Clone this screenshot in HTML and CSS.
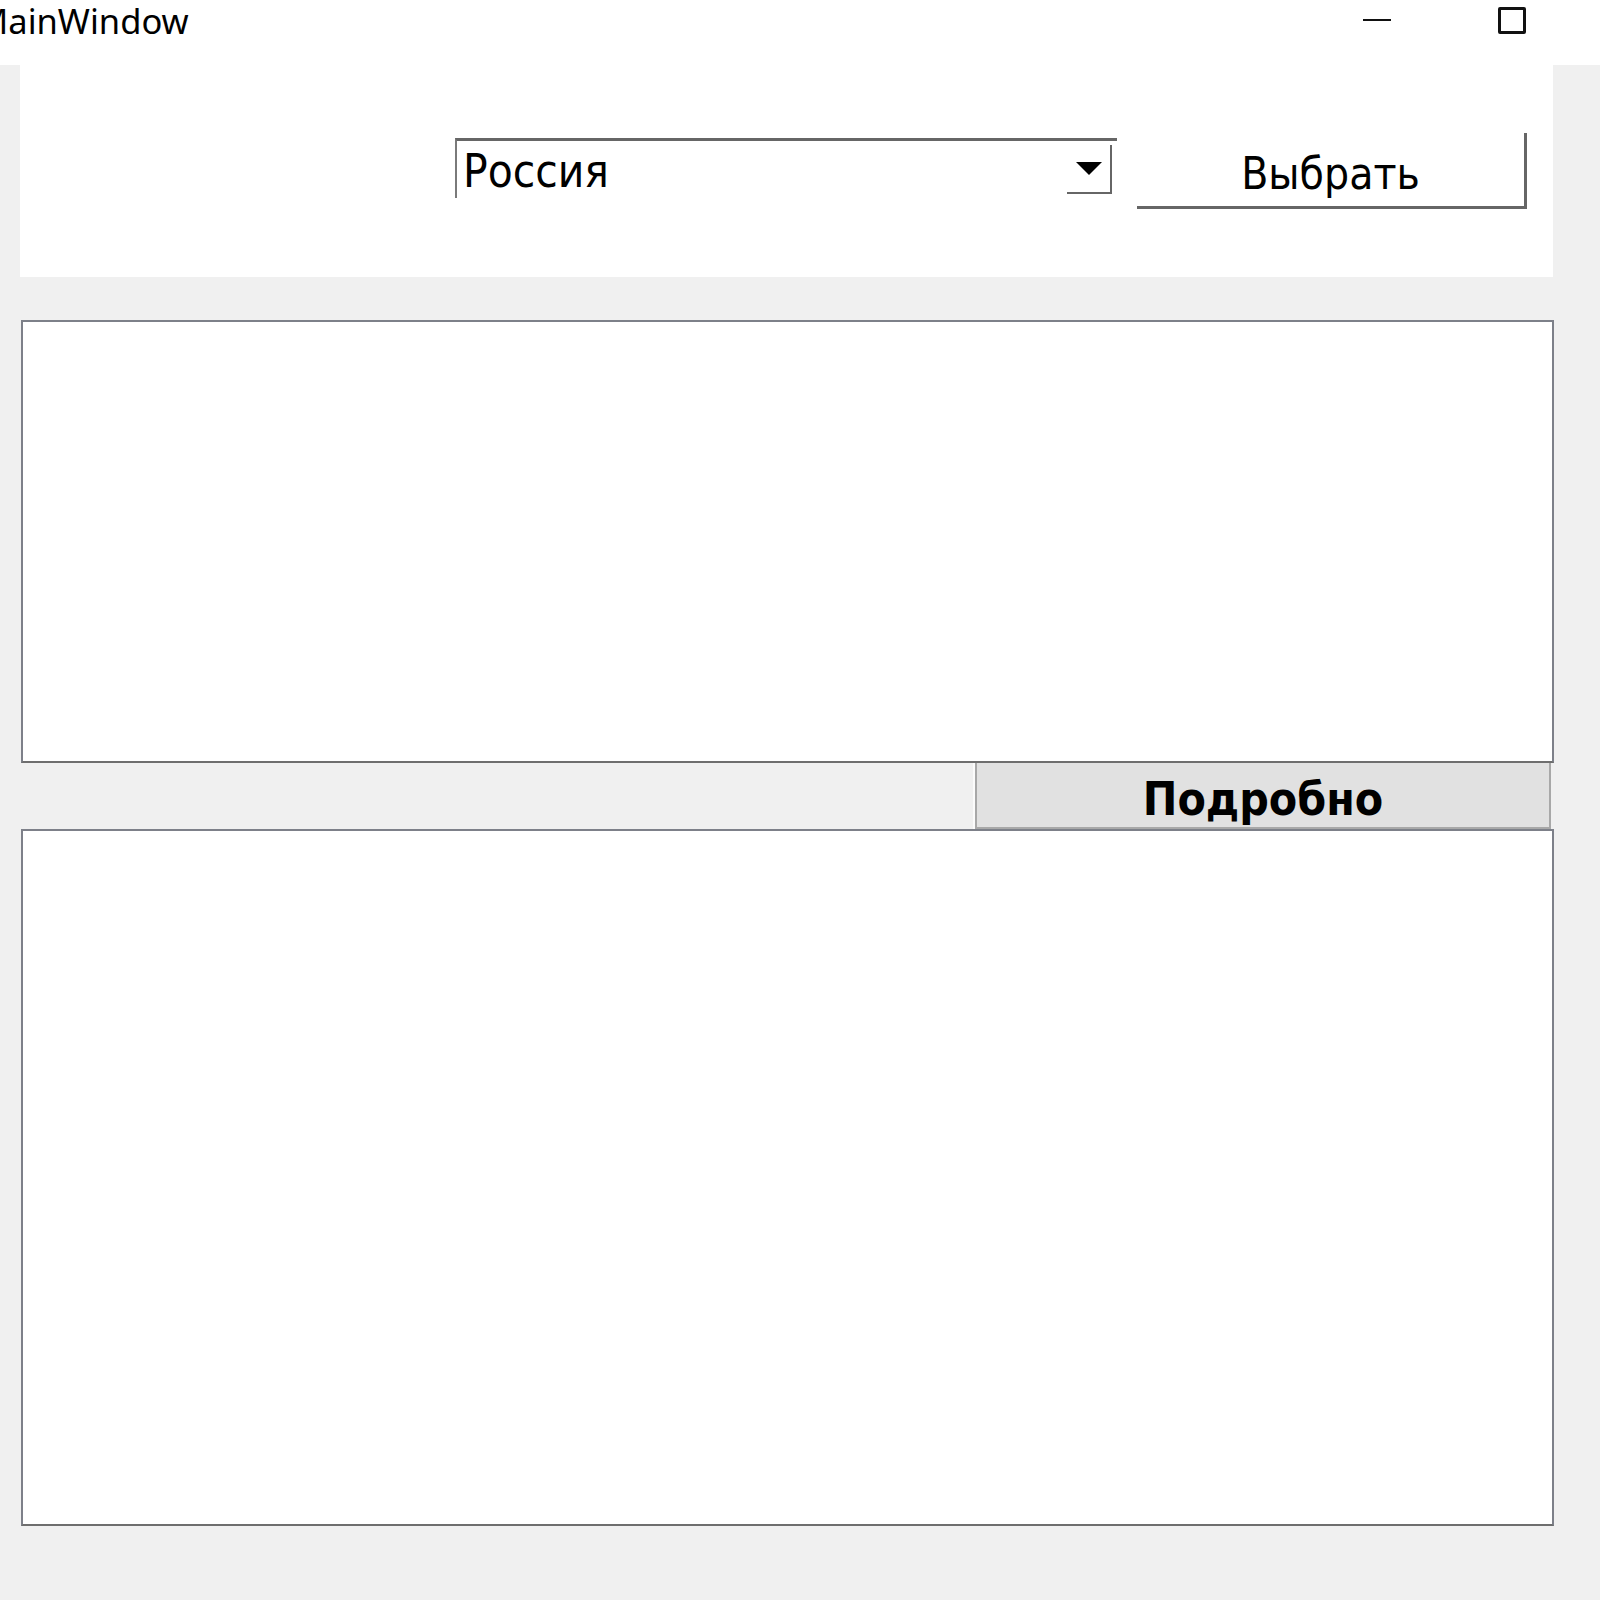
FILE: index.html
```html
<!DOCTYPE html>
<html lang="ru">
<head>
<meta charset="utf-8">
<title>MainWindow</title>
<link rel="stylesheet" href="styles.css">
</head>
<body>
<div class="window">
  <div class="titlebar">
    <span class="title">MainWindow</span>
    <div class="win-controls">
      <span class="win-min"></span>
      <span class="win-max"></span>
    </div>
  </div>
  <div class="top-panel">
    <div class="combo">
      <span class="combo-text">Россия</span>
      <span class="combo-btn">
        <svg width="26" height="13" viewBox="0 0 26 13"><polygon points="0,0 26,0 13,13" fill="#000"/></svg>
      </span>
    </div>
    <button class="choose-btn">Выбрать</button>
  </div>
  <div class="textbox textbox-top"></div>
  <div class="detail-row">
    <button class="detail-btn">Подробно</button>
  </div>
  <div class="textbox textbox-bottom"></div>
</div>
</body>
</html>
```

FILE: styles.css
```css
html, body {
  margin: 0;
  padding: 0;
}
body {
  background: #f0f0f0;
  width: 1600px;
  height: 1600px;
  overflow: hidden;
  font-family: "DejaVu Sans Condensed", "DejaVu Sans", sans-serif;
  font-stretch: condensed;
  color: #000;
}
.window {
  display: flex;
  flex-direction: column;
}
.titlebar {
  height: 65px;
  background: #fff;
  display: flex;
  align-items: flex-start;
}
.title {
  font-family: "Noto Sans", "Open Sans", sans-serif;
  font-stretch: normal;
  font-size: 34.5px;
  line-height: 45px;
  margin-left: -23px;
  margin-top: -2px;
  color: #000;
  white-space: nowrap;
}
.win-controls {
  margin-left: auto;
  margin-right: 74px;
  display: flex;
  align-items: flex-start;
}
.win-min {
  display: block;
  width: 28px;
  height: 2px;
  margin-top: 19px;
  background: #111;
}
.win-max {
  display: block;
  box-sizing: border-box;
  width: 28px;
  height: 27px;
  margin-top: 7px;
  margin-left: 107px;
  border: 3px solid #111;
  border-radius: 2px;
}
.top-panel {
  margin-left: 20px;
  width: 1533px;
  height: 212px;
  background: #fff;
  display: flex;
  align-items: flex-start;
}
.combo {
  box-sizing: border-box;
  width: 662px;
  height: 60px;
  margin-left: 435px;
  margin-top: 73px;
  border-top: 3px solid #666;
  border-left: 2px solid #7a7a7a;
  background: #fff;
  display: flex;
  align-items: flex-start;
}
.combo-text {
  font-size: 45.5px;
  line-height: 52px;
  margin-top: 5px;
  padding-left: 6px;
  white-space: nowrap;
}
.combo-btn {
  box-sizing: border-box;
  margin-left: auto;
  margin-top: 4px;
  margin-right: 5px;
  width: 45px;
  height: 49px;
  border-right: 2px solid #666;
  border-bottom: 2px solid #666;
  display: flex;
  align-items: center;
  justify-content: center;
}
.combo-btn svg {
  display: block;
}
.choose-btn {
  box-sizing: border-box;
  width: 390px;
  height: 76px;
  margin-left: 20px;
  margin-top: 68px;
  padding: 15px 0 0 0;
  background: #fff;
  border: none;
  border-right: 3px solid #666;
  border-bottom: 3px solid #666;
  font-family: inherit;
  font-stretch: condensed;
  font-size: 44px;
  line-height: 52px;
  color: #000;
  text-align: center;
  display: flex;
  justify-content: center;
  align-items: flex-start;
}
.textbox {
  box-sizing: border-box;
  margin-left: 21px;
  width: 1533px;
  background: #fff;
  border: 2px solid #7d8089;
  border-bottom-color: #6e6e6e;
}
.textbox-top {
  margin-top: 43px;
  height: 443px;
}
.detail-row {
  height: 66px;
  display: flex;
  justify-content: flex-end;
  padding-right: 49px;
}
.detail-btn {
  box-sizing: border-box;
  width: 576px;
  height: 66px;
  padding: 10px 0 0 0;
  background: #e1e1e1;
  border: 2px solid #a8a8a8;
  border-top: none;
  box-shadow: -2px 0 0 #fbfbfb;
  font-family: inherit;
  font-stretch: condensed;
  font-weight: bold;
  font-size: 46px;
  line-height: 52px;
  color: #000;
  display: flex;
  justify-content: center;
  align-items: flex-start;
}
.textbox-bottom {
  height: 697px;
}
```
